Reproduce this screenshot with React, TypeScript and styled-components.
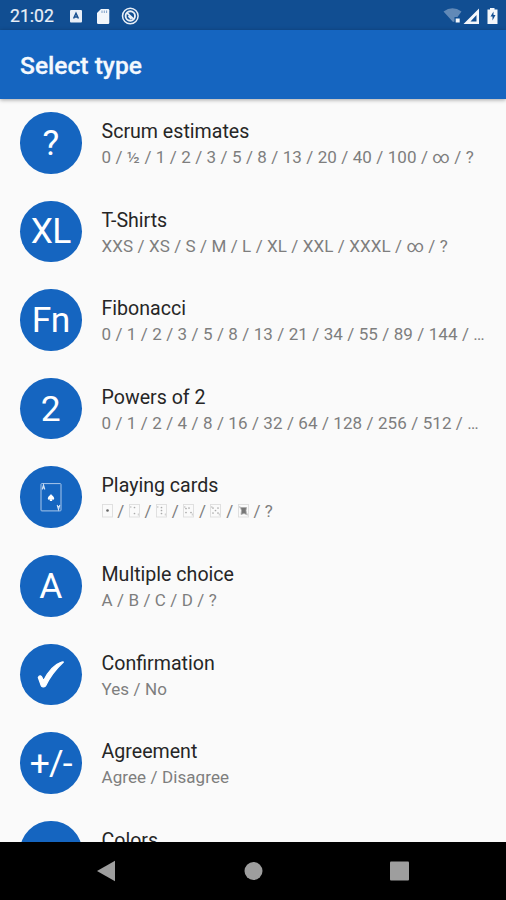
import React from "react";
import styled, { createGlobalStyle } from "styled-components";

const GlobalStyle = createGlobalStyle`
  * { box-sizing: border-box; }
  html, body { margin: 0; padding: 0; background: #fafafa; }
  body { font-family: Roboto, "Noto Sans", sans-serif; overflow: hidden; }
`;

const Screen = styled.div`
  width: 506px;
  height: 900px;
  display: flex;
  flex-direction: column;
  background: #fafafa;
  overflow: hidden;
`;

const StatusBar = styled.header`
  height: 30px;
  flex: none;
  display: flex;
  align-items: center;
  padding: 1px 7px 0 10px;
  background: #114e92;
  color: #e9eff7;
`;

const Clock = styled.span`
  width: 58px;
  font-size: 17.6px;
  line-height: 28px;
  -webkit-text-stroke: 0.2px currentColor;
`;

const StatusIcons = styled.div<{ $end?: boolean }>`
  display: flex;
  align-items: center;
  margin-left: ${(p) => (p.$end ? "auto" : "0")};
`;

const AppBar = styled.div`
  height: 68.5px;
  flex: none;
  display: flex;
  align-items: center;
  padding: 3px 20px 0;
  background: #1565c0;
  box-shadow: 0 1px 4px rgba(0, 0, 0, 0.35);
  z-index: 1;
`;

const Title = styled.h1`
  margin: 0;
  font-size: 24.6px;
  line-height: 32px;
  font-weight: 500;
  -webkit-text-stroke: 0.3px currentColor;
  color: #f4f8fd;
`;

const List = styled.ul`
  flex: 1;
  min-height: 0;
  margin: 0;
  padding: 0;
  list-style: none;
  overflow: hidden;
`;

const Row = styled.li`
  height: 88.6px;
  display: flex;
  align-items: center;
  gap: 20px;
  padding: 0 16px 0 20px;
`;

const Avatar = styled.div<{ $spacing?: number }>`
  width: 61.5px;
  height: 61.5px;
  flex: none;
  display: flex;
  align-items: center;
  justify-content: center;
  border-radius: 50%;
  background: #1565c0;
  color: #fff;
  font-size: 35.4px;
  line-height: 40px;
  letter-spacing: ${(p) => p.$spacing ?? 0}px;
  white-space: nowrap;
`;

const Labels = styled.div`
  flex: 1;
  min-width: 0;
  padding-top: 0.6px;
`;

const Name = styled.div`
  font-size: 19.6px;
  line-height: 28px;
  color: #262626;
`;

const Values = styled.div`
  display: flex;
  align-items: center;
  height: 22px;
  font-size: 17px;
  line-height: 22px;
  letter-spacing: 0.09px;
  color: #7e7e7e;
  white-space: pre;
`;

const NavBar = styled.nav`
  height: 58px;
  flex: none;
  display: flex;
  justify-content: space-between;
  align-items: center;
  padding: 0 96px;
  background: #000;
`;

const pips: [number, number][][] = [
  [[5.5, 6.5]],
  [[5.5, 3.5], [5.5, 9.5]],
  [[5.5, 3.5], [5.5, 6.5], [5.5, 9.5]],
  [[3, 4.5], [8, 8.5], [3, 8.5], [6, 4]],
  [[3, 4], [8, 4], [5.5, 6.5], [3, 9], [8, 9]],
];

const SmallCard = ({ rank }: { rank: number }) => (
  <svg width="11.5" height="14" viewBox="0 0 11.5 14">
    <rect x="0.5" y="0.5" width="10" height="12.5" fill="none" stroke="#ddd" strokeWidth="0.9" />
    {rank < 5 ? (
      pips[rank].map(([x, y]) => (
        <circle key={`${x}-${y}`} cx={x} cy={y} r={rank === 0 ? 1.3 : 0.85} fill={rank === 0 ? "#666" : "#aaa"} />
      ))
    ) : (
      <path d="M2.5 3.5h6l-.5 3 .5 4-2.500-1-3 1 .5-4z" fill="#777" stroke="#aaa" strokeWidth="0.8" />
    )}
    {rank > 0 && <path d="M1.8 2v2M9.3 9.5v2" stroke="#bbb" strokeWidth="0.8" />}
  </svg>
);

const LargeCard = () => (
  <svg width="22" height="30" viewBox="0 0 22 30">
    <rect x="1" y="1.6" width="20" height="27.3" rx="0.8" fill="none" stroke="#a9c7ea" strokeWidth="1" />
    <path d="M2.2 7.5 3.5 3l1.3 4.5M2.7 6h1.6M17.2 23l1.3 4.5 1.300-4.500M17.700 24.500h1.600" fill="none" stroke="#d4e3f4" strokeWidth="1.1" />
    <path d="M11 12c1 1.7 3.2 2.5 3.2 4.4 0 1.3-1.6 1.7-2.5.9l.7 1.8H9.6l.7-1.8c-.9.8-2.5.4-2.5-.9 0-1.9 2.2-2.7 3.2-4.400z" fill="#fff" />
  </svg>
);

const CheckMark = () => (
  <svg width="28" height="30" viewBox="0 0 28 30">
    <path
      d="M1.3 18.5C2.3 16.3 4 16.3 4.9 18.2l1.6 3.5C11 13 17.5 5.500 24 3.300c1-.4 1.800-.5 2.400-.3C20 9 13 17.500 8.800 26.500c-.7 1.500-3.800 2.200-4.500.4z"
      fill="#fff"
      stroke="#fff"
      strokeWidth="1.2"
      strokeLinejoin="round"
    />
  </svg>
);

const CardValues = () => (
  <>
    {[0, 1, 2, 3, 4, 5].map((rank) => (
      <React.Fragment key={rank}>
        <SmallCard rank={rank} />
        {" / "}
      </React.Fragment>
    ))}
    ?
  </>
);

type Entry = { badge: React.ReactNode; spacing?: number; name: string; values?: React.ReactNode };

const entries: Entry[] = [
  { badge: "?", name: "Scrum estimates", values: "0 / ½ / 1 / 2 / 3 / 5 / 8 / 13 / 20 / 40 / 100 / ∞ / ?" },
  { badge: "XL", spacing: -0.5, name: "T-Shirts", values: "XXS / XS / S / M / L / XL / XXL / XXXL / ∞ / ?" },
  { badge: "Fn", spacing: -0.5, name: "Fibonacci", values: "0 / 1 / 2 / 3 / 5 / 8 / 13 / 21 / 34 / 55 / 89 / 144 / …" },
  { badge: "2", name: "Powers of 2", values: "0 / 1 / 2 / 4 / 8 / 16 / 32 / 64 / 128 / 256 / 512 / …" },
  { badge: <LargeCard />, name: "Playing cards", values: <CardValues /> },
  { badge: "A", name: "Multiple choice", values: "A / B / C / D / ?" },
  { badge: <CheckMark />, name: "Confirmation", values: "Yes / No" },
  { badge: "+/-", spacing: -0.8, name: "Agreement", values: "Agree / Disagree" },
  { badge: "", name: "Colors" },
];

export default function App() {
  return (
    <>
      <GlobalStyle />
      <Screen>
        <StatusBar>
          <Clock>21:02</Clock>
          <StatusIcons>
            <svg width="75" height="22" viewBox="68 4 75 22">
              <rect x="70" y="9" width="12" height="12.5" rx="1" fill="#e9eff7" />
              <path d="M73.6 17.5 76 12.3 78.4 17.5M74.5 16h3" fill="none" stroke="#174f8f" strokeWidth="1.5" />
              <path d="M101 8h7q1.3 0 1.3 1.3v12.4q0 1.3-1.3 1.3H98.3q-1.3 0-1.3-1.3V12z" fill="#f2f6fb" />
              <path d="M102 9.5v2.5M104.3 9.5v2.5M106.6 9.5v2.5" stroke="#7fa0c8" strokeWidth="1" />
              <circle cx="130.3" cy="15" r="7.8" fill="none" stroke="#e9eff7" strokeWidth="1.5" />
              <circle cx="130.3" cy="15" r="4.7" fill="none" stroke="#e9eff7" strokeWidth="1.9" />
              <path d="m127 11.8 7 6.5M128.5 15l3 3" stroke="#e9eff7" strokeWidth="1.8" />
            </svg>
          </StatusIcons>
          <StatusIcons $end>
            <svg width="58" height="22" viewBox="441 4 58 22">
              <path d="M443.5 10.5q9-6.5 18 0l-4 5.5h-3v4.5l-1.5.5z" fill="#6189b7" />
              <rect x="455.7" y="17.5" width="4" height="4" fill="#f4f7fb" />
              <path d="M479 7.5V23h-15.5zM476.5 14l-6 6.5h6z" fill="#f4f7fb" fillRule="evenodd" />
              <path d="M490 7h4.5v1.5h3V23h-10V8.5h2.5z" fill="#f4f7fb" />
              <path d="m493.5 10.5-3 5h2v4l3-5.5h-2z" fill="#114e92" />
            </svg>
          </StatusIcons>
        </StatusBar>
        <AppBar>
          <Title>Select type</Title>
        </AppBar>
        <List>
          {entries.map((e) => (
            <Row key={e.name}>
              <Avatar $spacing={e.spacing}>{e.badge}</Avatar>
              <Labels>
                <Name>{e.name}</Name>
                <Values>{e.values}</Values>
              </Labels>
            </Row>
          ))}
        </List>
        <NavBar>
          <svg width="20" height="22" viewBox="0 0 20 22">
            <path d="M1 11 19 .8v20.4z" fill="#9e9e9e" />
          </svg>
          <svg width="20" height="20" viewBox="0 0 20 20">
            <circle cx="10.5" cy="10" r="9" fill="#9e9e9e" />
          </svg>
          <svg width="20" height="20" viewBox="0 0 20 20">
            <rect x="0" y="0.5" width="19" height="19" rx="1" fill="#9e9e9e" />
          </svg>
        </NavBar>
      </Screen>
    </>
  );
}
